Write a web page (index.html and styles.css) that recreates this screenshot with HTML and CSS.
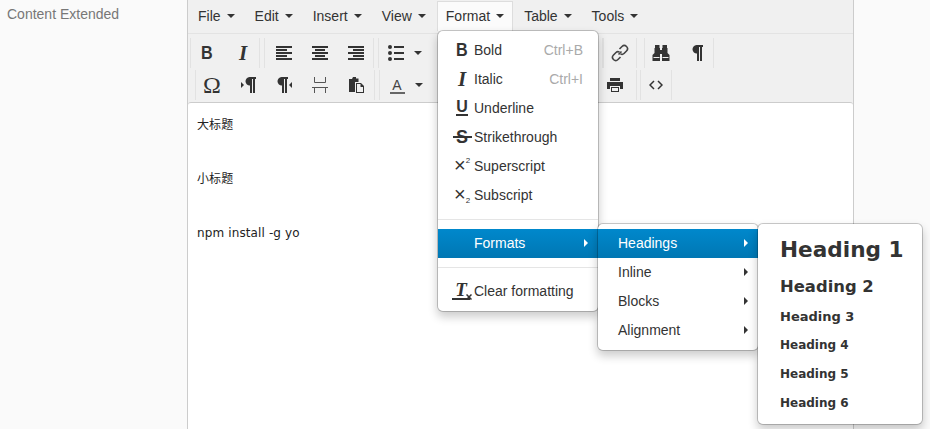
FILE: index.html
```html
<!DOCTYPE html>
<html lang="en">
<head>
    <meta charset="utf-8">
    <title>Content Extended</title>
    <link rel="stylesheet" href="styles.css">
</head>
<body>
    <svg class="defs" width="0" height="0">
        <symbol id="i-left" viewBox="0 0 16 14"><path d="M0 0h16v2H0zM0 3h11v2H0zM0 6h16v2H0zM0 9h11v2H0zM0 12h16v2H0z"/></symbol>
        <symbol id="i-center" viewBox="0 0 16 14"><path d="M0 0h16v2H0zM3 3h10v2H3zM0 6h16v2H0zM3 9h10v2H3zM0 12h16v2H0z"/></symbol>
        <symbol id="i-right" viewBox="0 0 16 14"><path d="M0 0h16v2H0zM5 3h11v2H5zM0 6h16v2H0zM5 9h11v2H5zM0 12h16v2H0z"/></symbol>
        <symbol id="i-pilcrow" viewBox="0 0 11 16"><path d="M4.500 0H11v2h-1v14H8V2H7v14H5V8.500A4.250 4.250 0 0 1 4.500 0z"/></symbol>
    </svg>

    <div class="page">
        <label class="field-label">Content Extended</label>

        <div class="editor">
            <div class="menubar">
                <span class="menu-btn">File<i class="caret"></i></span>
                <span class="menu-btn">Edit<i class="caret"></i></span>
                <span class="menu-btn">Insert<i class="caret"></i></span>
                <span class="menu-btn">View<i class="caret"></i></span>
                <span class="menu-btn active">Format<i class="caret"></i></span>
                <span class="menu-btn">Table<i class="caret"></i></span>
                <span class="menu-btn">Tools<i class="caret"></i></span>
            </div>

            <div class="toolbar">
                <div class="tb-row first">
                    <div class="tb-group">
                        <span class="tb-btn"><b class="g-bold">B</b></span>
                        <span class="tb-btn"><b class="g-italic">I</b></span>
                    </div>
                    <div class="tb-group wide">
                        <span class="tb-btn"><svg class="ico" width="16" height="14"><use href="#i-left"/></svg></span>
                        <span class="tb-btn"><svg class="ico" width="16" height="14"><use href="#i-center"/></svg></span>
                        <span class="tb-btn"><svg class="ico" width="16" height="14"><use href="#i-right"/></svg></span>
                    </div>
                    <div class="tb-group split-group list-group">
                        <span class="tb-btn">
                            <svg class="ico" width="16" height="16" viewBox="0 0 16 16">
                                <circle cx="2" cy="2" r="2"/><circle cx="2" cy="8" r="2"/><circle cx="2" cy="14" r="2"/>
                                <path d="M6 1h10v2H6zM6 7h10v2H6zM6 13h10v2H6z"/>
                            </svg>
                        </span>
                        <i class="caret tb-caret"></i>
                    </div>
                    <div class="tb-group link-group">
                        <span class="tb-btn">
                            <svg width="18" height="18" viewBox="0 0 18 18" fill="none" stroke="#444" stroke-width="1.6">
                                <path d="M7.500 10.500l3-3"/>
                                <path d="M8.500 5l2.500-2.500a2.800 2.800 0 0 1 4.500 4.500L13 9.500a2.800 2.800 0 0 1-3.500.3"/>
                                <path d="M9.500 13L7 15.500A2.800 2.800 0 0 1 2.500 11L5 8.500a2.800 2.800 0 0 1 3.500-.3"/>
                            </svg>
                        </span>
                    </div>
                    <div class="tb-group find-group">
                        <span class="tb-btn">
                            <svg class="ico" width="18" height="16" viewBox="0 0 18 16">
                                <path d="M3 0h4.500v3H8v2h2V3h.5V0H15v3h.5v5l2 2v6H10V9H8v7H.5v-6l2-2V3H3z"/>
                                <path fill="#f0f0f0" d="M1.500 12h6v1h-6zM10.500 12h6v1h-6z"/>
                            </svg>
                        </span>
                        <span class="tb-btn"><svg class="ico" width="11" height="16"><use href="#i-pilcrow"/></svg></span>
                    </div>
                </div>

                <div class="tb-row second">
                    <div class="tb-group wide-right">
                        <span class="tb-btn g-omega">Ω</span>
                        <span class="tb-btn"><i class="tri-right"></i><svg class="ico" width="11" height="16"><use href="#i-pilcrow"/></svg></span>
                        <span class="tb-btn"><svg class="ico" width="11" height="16"><use href="#i-pilcrow"/></svg><i class="tri-left"></i></span>
                        <span class="tb-btn">
                            <svg width="16" height="16" viewBox="0 0 16 16" fill="none" stroke="#555" stroke-width="1">
                                <path d="M2.500 0v5.500h11V0M0 10.500h16M2.500 16v-5.500M13.500 16v-5.500"/>
                            </svg>
                        </span>
                        <span class="tb-btn">
                            <svg class="ico" width="15" height="16" viewBox="0 0 15 16">
                                <path d="M4 0h3v1.500h2.500V5H6v10H0V2h3z"/>
                                <path d="M7 6h5l3 3v7H7z"/>
                                <path fill="#f0f0f0" d="M8 7h3.500v3H14v5H8z"/>
                            </svg>
                        </span>
                    </div>
                    <div class="tb-group split-group color-group">
                        <span class="tb-btn"><span class="g-color">A</span></span>
                        <i class="caret tb-caret"></i>
                        <span class="tb-btn print-btn">
                            <svg class="ico" width="16" height="14" viewBox="0 0 16 14">
                                <path d="M3 0h10v3H3zM0 4h16v7h-3V8H3v3H0z"/>
                                <path d="M4 9h8v5H4z"/>
                                <path fill="#f0f0f0" d="M5 10h6v3H5z"/>
                            </svg>
                        </span>
                    </div>
                    <div class="tb-group code-group">
                        <span class="tb-btn">
                            <svg width="14" height="10" viewBox="0 0 14 10" fill="none" stroke="#333" stroke-width="1.500">
                                <path d="M5 1L1 5l4 4M9 1l4 4-4 4"/>
                            </svg>
                        </span>
                    </div>
                </div>
            </div>

            <div class="edit-area">
                <p>大标题</p>
                <p><br></p>
                <p>小标题</p>
                <p><br></p>
                <p>npm install -g yo</p>
            </div>
        </div>
    </div>

    <ul class="menu menu-format">
        <li><span class="mi"><b class="g-bold">B</b></span>Bold<span class="shortcut">Ctrl+B</span></li>
        <li><span class="mi"><b class="g-italic">I</b></span>Italic<span class="shortcut">Ctrl+I</span></li>
        <li><span class="mi"><b class="g-under">U</b></span>Underline</li>
        <li><span class="mi"><b class="g-strike">S</b></span>Strikethrough</li>
        <li><span class="mi g-x">×<sup>2</sup></span>Superscript</li>
        <li><span class="mi g-x">×<sub>2</sub></span>Subscript</li>
        <li class="divider"></li>
        <li class="selected"><span class="mi"></span>Formats<i class="arrow"></i></li>
        <li class="divider"></li>
        <li>
            <span class="mi">
                <b class="g-clear">T</b>
                <svg class="g-clear-x" width="6" height="6" viewBox="0 0 6 6" fill="none" stroke="#333" stroke-width="1.500"><path d="M.5.5l5 5M5.500.5l-5 5"/></svg>
            </span>Clear formatting
        </li>
    </ul>

    <ul class="menu menu-sub">
        <li class="selected">Headings<i class="arrow"></i></li>
        <li>Inline<i class="arrow"></i></li>
        <li>Blocks<i class="arrow"></i></li>
        <li>Alignment<i class="arrow"></i></li>
    </ul>

    <ul class="menu menu-heads">
        <li class="h1">Heading 1</li>
        <li class="h2">Heading 2</li>
        <li class="h3">Heading 3</li>
        <li class="h4">Heading 4</li>
        <li class="h5">Heading 5</li>
        <li class="h6">Heading 6</li>
    </ul>
</body>
</html>
```

FILE: styles.css
```css
html, body {
    margin: 0;
    height: 429px;
    overflow: hidden;
}

body {
    position: relative;
    background-color: #fafafa;
    font-family: "Liberation Sans", Arial, sans-serif;
    font-size: 14px;
    color: #333;
}

.defs {
    position: absolute;
}

.page {
    display: flex;
    height: 429px;
}

.field-label {
    flex: 0 0 180px;
    padding: 6px 0 0 7px;
    line-height: 16px;
    color: #777;
}

/* editor */
.editor {
    flex: 0 0 665px;
    display: flex;
    flex-direction: column;
    border-left: 1px solid #ccc;
    border-right: 1px solid #ccc;
    background-color: #f0f0f0;
}

.menubar {
    display: flex;
    gap: 2px;
    flex: 0 0 34px;
    box-sizing: border-box;
    padding: 1px 0 0 1px;
    border-bottom: 1px solid #e3e3e3;
}

.menu-btn {
    display: flex;
    align-items: center;
    box-sizing: border-box;
    height: 30px;
    padding: 0 8px 2px;
    border: 1px solid transparent;
    border-bottom: 0;
}

.menu-btn.active {
    background-color: #fbfbfb;
    border-color: #ddd;
}

.caret {
    display: inline-block;
    width: 0;
    height: 0;
    margin-left: 6px;
    border-top: 4px solid #333;
    border-left: 4px solid transparent;
    border-right: 4px solid transparent;
}

.toolbar {
    flex: 0 0 68px;
    box-sizing: border-box;
    padding-top: 4px;
}

.tb-row {
    display: flex;
    gap: 4px;
    height: 30px;
    margin-bottom: 2px;
}

.tb-row.first {
    padding-left: 2px;
}

.tb-row.second {
    padding-left: 7px;
}

.tb-group {
    display: flex;
    gap: 6px;
    padding: 0 1px;
    border-left: 1px solid #e2e2e2;
    border-right: 1px solid #e2e2e2;
}

.tb-group.wide {
    padding: 0 2px 0 4px;
}

.tb-group.wide-right {
    padding-right: 3px;
}

/* groups that run on underneath the open menu */
.split-group {
    box-sizing: border-box;
    align-items: center;
    gap: 0;
    padding-left: 2px;
}

.list-group {
    width: 225px;
}

.color-group {
    width: 258px;
    padding-right: 6px;
}

.print-btn {
    margin-left: auto;
}

.link-group {
    margin-left: -4px;
}

.find-group {
    margin-left: 3px;
}

.code-group {
    margin-left: -1px;
    padding: 0;
}

.tb-btn {
    display: flex;
    align-items: center;
    justify-content: center;
    width: 30px;
    height: 30px;
}

.tb-caret {
    margin-left: 3px;
}

.ico {
    fill: #333;
}

.g-bold {
    display: inline-block;
    font-size: 19px;
    line-height: 20px;
    transform: scaleX(0.85);
}

.g-italic {
    font-family: "Liberation Serif", serif;
    font-style: italic;
    font-size: 21px;
    line-height: 20px;
}

.g-omega {
    font-family: "Liberation Serif", serif;
    font-size: 24px;
}

.tri-right,
.tri-left {
    width: 0;
    height: 0;
    border-top: 3px solid transparent;
    border-bottom: 3px solid transparent;
}

.tri-right {
    border-left: 3px solid #333;
    margin-right: 1px;
}

.tri-left {
    border-right: 3px solid #333;
    margin-left: 1px;
}

.g-color {
    width: 15px;
    margin-top: 3px;
    font-size: 14px;
    line-height: 13px;
    text-align: center;
    color: #444;
    border-bottom: 2px solid #666;
}

.edit-area {
    flex: 1;
    padding: 15px 9px 0;
    border-top: 1px solid #ccc;
    border-radius: 3px 3px 0 0;
    background-color: #fff;
    font-family: "DejaVu Sans", "Noto Sans CJK SC", sans-serif;
    font-size: 12px;
    letter-spacing: 0.12px;
    line-height: 15px;
    color: #222;
}

.edit-area p {
    margin: 0 0 12px;
}

/* dropdown menus */
.menu {
    position: absolute;
    box-sizing: border-box;
    top: 223px;
    width: 162px;
    margin: 0;
    padding: 5px 0;
    list-style: none;
    background-color: #fff;
    border: 1px solid rgba(0, 0, 0, 0.2);
    border-radius: 6px;
    background-clip: padding-box;
    box-shadow: 0 5px 10px rgba(0, 0, 0, 0.2);
}

.menu li {
    position: relative;
    display: flex;
    align-items: center;
    box-sizing: border-box;
    height: 29px;
    padding-bottom: 2px;
}

.menu-format {
    left: 437px;
    top: 30px;
}

.menu-format li {
    padding-left: 14px;
    padding-right: 15px;
}

.menu-format .arrow {
    margin-right: -5px;
}

.menu-sub {
    left: 597px;
    z-index: 1;
}

.menu-sub li {
    padding-left: 20px;
    padding-right: 10px;
}

.menu-heads {
    left: 757px;
    width: 166px;
    padding-bottom: 6px;
    z-index: 2;
    font-family: "DejaVu Sans", Verdana, sans-serif;
    font-weight: bold;
}

.menu-heads li {
    padding-left: 22px;
}

.menu .divider {
    height: 1px;
    margin: 9px 0;
    padding: 0;
    background-color: #e5e5e5;
}

.menu .selected {
    color: #fff;
    background: linear-gradient(to bottom, #0088cc, #0077b3);
}

.mi {
    position: relative;
    display: flex;
    align-items: center;
    justify-content: center;
    flex: 0 0 20px;
    margin-right: 2px;
    height: 27px;
}

.shortcut {
    margin-left: auto;
    color: #aaa;
}

.arrow {
    margin-left: auto;
    border-top: 4px solid transparent;
    border-bottom: 4px solid transparent;
    border-left: 4px solid #333;
}

.selected .arrow {
    border-left-color: #fff;
}

.g-under {
    font-size: 16px;
    line-height: 15px;
    border-bottom: 2px solid #333;
}

.g-strike {
    position: relative;
    font-size: 18px;
    line-height: 18px;
}

.g-strike::after {
    content: "";
    position: absolute;
    left: -3px;
    right: -4px;
    top: 8px;
    height: 2px;
    background-color: #333;
}

.g-x {
    font-size: 20px;
    justify-content: flex-start;
    padding-left: 2px;
    box-sizing: border-box;
}

.g-x sup,
.g-x sub {
    font-size: 8px;
    line-height: 8px;
}

.g-x sup {
    align-self: flex-start;
    margin-top: 5px;
}

.g-x sub {
    align-self: flex-end;
    margin-bottom: 3px;
}

.g-clear {
    font-family: "Liberation Serif", serif;
    font-style: italic;
    font-size: 19px;
    line-height: 16px;
    padding: 0 3px;
    margin-right: 2px;
    border-bottom: 2px solid #333;
}

.g-clear-x {
    position: absolute;
    right: 0;
    top: 17px;
}

.menu .h1 { font-size: 21.6px; height: 42px; }
.menu .h2 { font-size: 16.4px; height: 32px; }
.menu .h3 { font-size: 13px; height: 28px; }
.menu .h4,
.menu .h5,
.menu .h6 { font-size: 12px; }
```
